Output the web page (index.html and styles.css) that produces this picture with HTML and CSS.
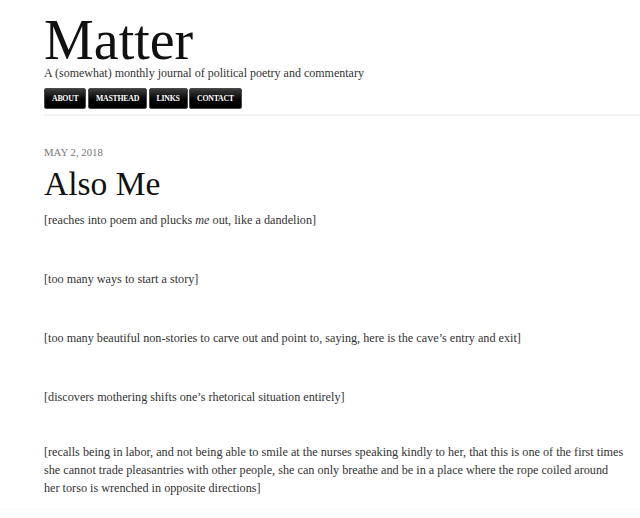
FILE: index.html
```html
<!DOCTYPE html>
<html>
<head>
<meta charset="utf-8">
<link rel="stylesheet" href="styles.css">
</head>
<body>
<div class="page">
  <header class="header">
    <h1 class="site-title">Matter</h1>
    <p class="tagline">A (somewhat) monthly journal of political poetry and commentary</p>
    <nav class="nav">
      <a class="nav-btn">ABOUT</a>
      <a class="nav-btn">MASTHEAD</a>
      <a class="nav-btn">LINKS</a>
      <a class="nav-btn">CONTACT</a>
    </nav>
  </header>
  <div class="rule"></div>
  <main class="post">
    <div class="date">MAY 2, 2018</div>
    <h2 class="post-title">Also Me</h2>
    <p class="verse">[reaches into poem and plucks <em>me</em> out, like a dandelion]</p>
    <p class="verse">[too many ways to start a story]</p>
    <p class="verse">[too many beautiful non-stories to carve out and point to, saying, here is the cave’s entry and exit]</p>
    <p class="verse verse-tight">[discovers mothering shifts one’s rhetorical situation entirely]</p>
    <p class="verse">[recalls being in labor, and not being able to smile at the nurses speaking kindly to her, that this is one of the first times she cannot trade pleasantries with other people, she can only breathe and be in a place where the rope coiled around her torso is wrenched in opposite directions]</p>
  </main>
  <div class="footer-band"></div>
</div>
</body>
</html>
```
FILE: styles.css
```css
html, body {
  margin: 0;
  padding: 0;
  background: #fff;
}
body {
  font-family: "Liberation Serif", "DejaVu Serif", serif;
  color: #222;
  height: 518px;
  overflow: hidden;
}
.page {
  display: flex;
  flex-direction: column;
  height: 518px;
}
.header {
  padding: 14px 0 5px 44px;
}
.site-title {
  margin: 0;
  font-weight: normal;
  font-size: 56px;
  line-height: 52px;
  color: #111;
}
.tagline {
  margin: 0;
  font-size: 12px;
  line-height: 14px;
  color: #333;
}
.nav {
  display: flex;
  gap: 1.5px;
  margin-top: 8px;
}
.nav-btn {
  display: block;
  background: linear-gradient(#3c3c3c, #050505 55%, #000);
  color: #fff;
  font-weight: bold;
  font-size: 7.8px;
  line-height: 19px;
  padding: 0 7px;
  border-radius: 2px;
  border: 1px solid #4a4a4a;
  letter-spacing: -0.25px;
}
.rule {
  margin-left: 44px;
  height: 2px;
  background: #f2f2f2;
}
.post {
  padding: 29px 14px 0 44px;
  flex: 1;
}
.date {
  font-size: 10.8px;
  color: #777;
  line-height: 14px;
}
.post-title {
  margin: 5px 0 7px;
  font-weight: normal;
  font-size: 33.5px;
  line-height: 40px;
  color: #111;
}
.verse {
  margin: 0 0 41px;
  font-size: 12.2px;
  line-height: 18px;
  color: #333;
}
.verse-tight {
  margin-bottom: 37px;
}
.verse:last-child {
  margin-bottom: 0;
}
.footer-band {
  height: 10px;
  background: #fcfcfc;
  flex: none;
}
```
